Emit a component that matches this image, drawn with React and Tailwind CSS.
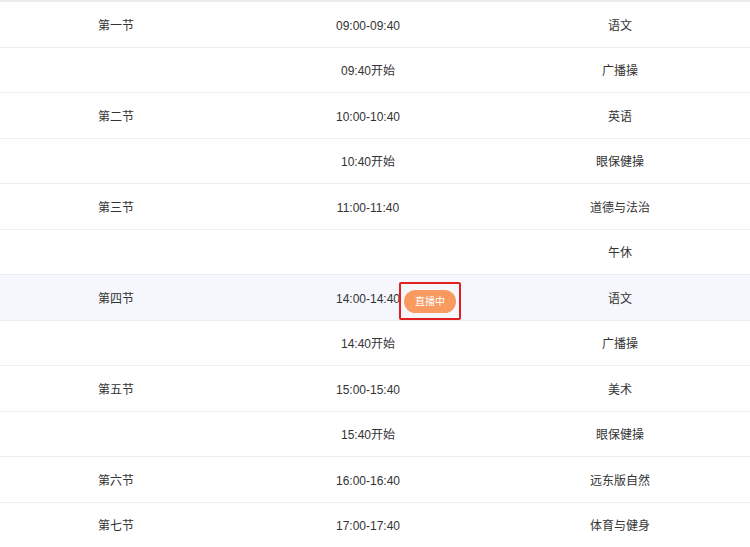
const rows=[["第一节","09:00-09:40","语文"],["","09:40开始","广播操"],["第二节","10:00-10:40","英语"],["","10:40开始","眼保健操"],["第三节","11:00-11:40","道德与法治"],["","","午休"],["第四节","14:00-14:40","语文",true],["","14:40开始","广播操"],["第五节","15:00-15:40","美术"],["","15:40开始","眼保健操"],["第六节","16:00-16:40","远东版自然"],["第七节","17:00-17:40","体育与健身"]];
export default function App(){return(<div className="w-[750px] h-[547px] overflow-hidden bg-white text-[12px] text-[#333]" style={{fontFamily:'"Liberation Sans","Noto Sans CJK SC",sans-serif'}}>
<div className="h-[2px] bg-[#ececec]"></div>
{rows.map((r,i)=>(<div key={i} className={`relative h-[45.5px] pt-[3px] border-b border-[#ebeef5] grid grid-cols-[232px_272px_232px] items-center ${r[3]?"bg-[#f5f7fc]":""}`}>
<div className="text-center">{r[0]}</div>
<div className="text-center">{r[1]}</div>
<div className="text-center">{r[2]}</div>
{r[3]&&<div className="absolute left-[399px] top-[7px] w-[62px] h-[38px] border-2 border-[#e02020] rounded-[2px] flex items-center justify-center"><div className="w-[52px] h-[23px] rounded-full bg-[#f99a60] text-white text-[10px] flex items-center justify-center">直播中</div></div>}
</div>))}
</div>)}
